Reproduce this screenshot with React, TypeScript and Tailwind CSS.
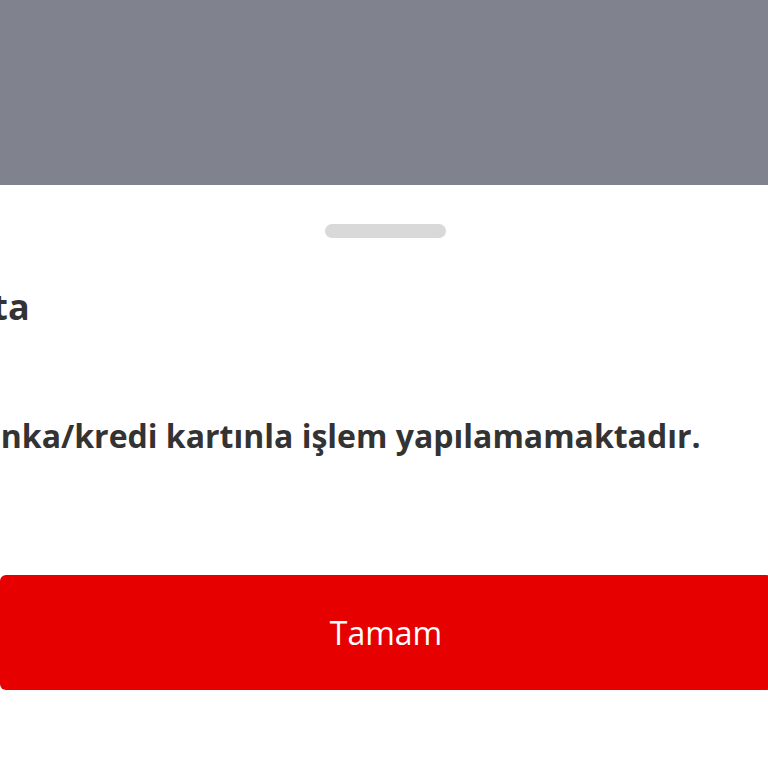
import React from "react";

export default function App() {
  return (
    <div className="w-[768px] h-[768px] overflow-hidden bg-white font-['Open_Sans',sans-serif]">
      {/* dimmed backdrop */}
      <div className="h-[185px] bg-[#80838e]" />

      {/* bottom sheet */}
      <div className="flex flex-col">
        <div className="mt-[39px] ml-[325px] w-[121px] h-[14px] rounded-full bg-[#d9d9d9]" />

        <div className="-ml-[40px] text-[#333333]">
          <h2 className="mt-[45px] -ml-[17px] text-[36px] font-bold leading-[48px]">Hata</h2>
          <p className="mt-[83px] text-[32px] font-bold leading-[44px] whitespace-nowrap">
            Banka/kredi kartınla işlem yapılamamaktadır.
          </p>
        </div>

        <button
          type="button"
          className="mt-[117px] w-[772px] h-[115px] rounded-[6px] bg-[#e60000] text-white text-[32px] flex items-center justify-center"
        >
          Tamam
        </button>
      </div>
    </div>
  );
}
